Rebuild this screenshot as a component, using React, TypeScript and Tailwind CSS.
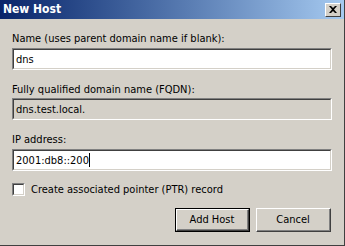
import React, { useState } from 'react';

const sunken =
  'border-t border-l border-t-[#808080] border-l-[#808080] border-b border-r border-b-white border-r-white';
const sunkenInner =
  'border-t border-l border-t-[#404040] border-l-[#404040] border-b border-r border-b-[#d4d0c8] border-r-[#d4d0c8]';

const Field: React.FC<{ value: string; readOnly?: boolean; caret?: boolean }> = ({ value, readOnly, caret }) => (
  <div className={`h-[22px] ${sunken}`}>
    <div className={`h-full flex items-center px-[2px] ${sunkenInner} ${readOnly ? 'bg-[#d4d0c8]' : 'bg-white'}`}>
      <span className="text-black">{value}</span>
      {caret && <span className="w-px h-[14px] bg-black" />}
    </div>
  </div>
);

const Button: React.FC<{ label: string; primary?: boolean }> = ({ label, primary }) => (
  <div className={`w-[75px] h-[24px] ${primary ? 'border border-black' : ''}`}>
    <div className="h-full border-t border-l border-t-white border-l-white border-b border-r border-b-[#404040] border-r-[#404040]">
      <div className="h-full flex items-center justify-center border-b border-r border-b-[#808080] border-r-[#808080] bg-[#d4d0c8] text-black">
        {label}
      </div>
    </div>
  </div>
);

const App: React.FC = () => {
  const [ptr, setPtr] = useState(false);

  return (
    <div
      className="w-[345px] h-[246px] bg-[#d4d0c8] flex flex-col text-[11px] leading-[13px] border-r border-b border-r-[#404040] border-b-[#404040] overflow-hidden"
      style={{ fontFamily: '"DejaVu Sans Condensed", "DejaVu Sans", sans-serif' }}
    >
      {/* title bar */}
      <div className="h-[19px] flex items-center justify-between pl-[3px] pr-[3px] bg-gradient-to-r from-[#0a246a] to-[#a6caf0]">
        <span className="text-white font-bold text-[12px]">New Host</span>
        <div className="w-[16px] h-[14px] border-t border-l border-t-white border-l-white border-b border-r border-b-[#404040] border-r-[#404040] bg-[#d4d0c8] flex items-center justify-center">
          <svg width="8" height="7" viewBox="0 0 8 7">
            <path d="M0 0h2l2 2 2-2h2L5 3.5 8 7H6L4 5 2 7H0l3-3.5z" fill="black" />
          </svg>
        </div>
      </div>

      <div className="flex flex-col px-[12px] pr-[12px]">
        <div className="mt-[13px] h-[13px] text-black">Name (uses parent domain name if blank):</div>
        <div className="mt-[3px]">
          <Field value="dns" />
        </div>

        <div className="mt-[13px] h-[13px] text-black">Fully qualified domain name (FQDN):</div>
        <div className="mt-[2px]">
          <Field value="dns.test.local." readOnly />
        </div>

        <div className="mt-[13px] h-[13px] text-black">IP address:</div>
        <div className="mt-[3px]">
          <Field value="2001:db8::200" caret />
        </div>

        <label className="mt-[12px] h-[13px] flex items-center gap-[6px] text-black" onClick={() => setPtr(!ptr)}>
          <span className={`w-[13px] h-[13px] bg-white ${sunken}`}>
            <span className={`block w-full h-full ${sunkenInner} bg-white`} />
          </span>
          Create associated pointer (PTR) record
        </label>

        <div className="mt-[12px] flex justify-end gap-[6px] pr-[1px]">
          <Button label="Add Host" primary />
          <Button label="Cancel" />
        </div>
      </div>
    </div>
  );
};

export default App;
